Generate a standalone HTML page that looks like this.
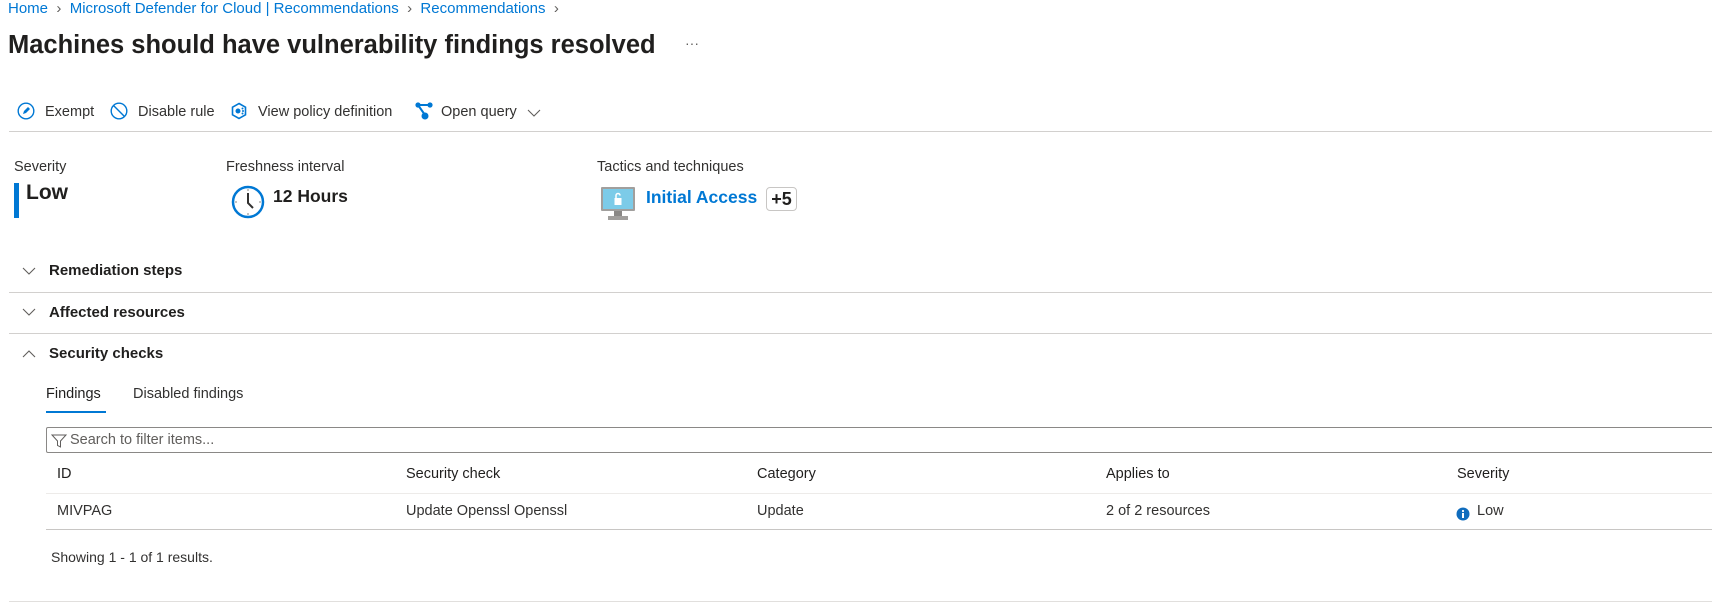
<!DOCTYPE html>
<html><head><meta charset="utf-8"><style>
body{margin:0;width:1712px;height:607px;background:#fff;font-family:"Liberation Sans",sans-serif;color:#323130;position:relative;overflow:hidden;font-size:14.5px}
.a{position:absolute;white-space:nowrap}
.bc{color:#0078d4;font-size:15px}
.sep{color:#605e5c}
.hl{position:absolute;height:1px;background:#e1dfdd}
.b{font-weight:bold;color:#201f1e;font-size:15px}
svg{position:absolute}
</style></head><body>
<div class="a bc" style="left:8px;top:0px">Home <span class="sep">&nbsp;›&nbsp;</span> Microsoft Defender for Cloud | Recommendations <span class="sep">&nbsp;›&nbsp;</span> Recommendations <span class="sep">&nbsp;›</span></div>
<div class="a" style="left:8px;top:31px;font-size:25.5px;font-weight:600;color:#201f1e">Machines should have vulnerability findings resolved</div>
<div class="a" style="left:685px;top:35px;font-size:14px;color:#605e5c">···</div>

<svg style="left:17px;top:102px" width="18" height="18" viewBox="0 0 18 18"><circle cx="9" cy="9" r="7.8" fill="none" stroke="#0078d4" stroke-width="1.4"/><path d="M6 12l1-3 4-4 2 2-4 4z" fill="#0078d4"/></svg>
<div class="a" style="left:45px;top:104px">Exempt</div>
<svg style="left:110px;top:102px" width="18" height="18" viewBox="0 0 18 18"><circle cx="9" cy="9" r="7.8" fill="none" stroke="#0078d4" stroke-width="1.4"/><path d="M3.5 3.5L14.5 14.5" stroke="#0078d4" stroke-width="1.4"/></svg>
<div class="a" style="left:138px;top:104px">Disable rule</div>
<svg style="left:230px;top:102px" width="18" height="18" viewBox="0 0 18 18"><path d="M9 1.5l6.5 3.7v7.6L9 16.5 2.5 12.8V5.2z" fill="none" stroke="#0078d4" stroke-width="1.6"/><circle cx="8" cy="9" r="2.5" fill="#0078d4"/><circle cx="12.5" cy="6.5" r="1" fill="#0078d4"/><circle cx="12.5" cy="11.5" r="1" fill="#0078d4"/><circle cx="13" cy="9" r="1" fill="#0078d4"/></svg>
<div class="a" style="left:258px;top:104px">View policy definition</div>
<svg style="left:414px;top:101px" width="20" height="20" viewBox="0 0 20 20"><path d="M4 4L16 4M4 4L11 14" stroke="#0078d4" stroke-width="2"/><circle cx="4" cy="4" r="2.6" fill="#0078d4"/><circle cx="16" cy="4" r="2.6" fill="#0078d4"/><circle cx="11" cy="15" r="3.5" fill="#0078d4"/></svg>
<div class="a" style="left:441px;top:104px">Open query</div>
<svg style="left:527px;top:108px" width="14" height="10" viewBox="0 0 14 10"><path d="M1 2l6 6 6-6" fill="none" stroke="#605e5c" stroke-width="1.1"/></svg>
<div class="hl" style="left:9px;right:0;top:131px;background:#d2d0ce"></div>

<div class="a" style="left:14px;top:159px">Severity</div>
<div style="position:absolute;left:14px;top:183px;width:5px;height:35px;background:#0078d4"></div>
<div class="a" style="left:26px;top:181px;font-size:21px;font-weight:bold;color:#201f1e">Low</div>

<div class="a" style="left:226px;top:159px">Freshness interval</div>
<svg style="left:231px;top:185px" width="34" height="34" viewBox="0 0 34 34"><circle cx="17" cy="17" r="15" fill="#fff" stroke="#0078d4" stroke-width="2.5"/><g stroke="#8a8886" stroke-width="1"><path d="M17 4v2M17 28v2M4 17h2M28 17h2"/></g><path d="M17 8v10l5 5" fill="none" stroke="#323130" stroke-width="2"/></svg>
<div class="a" style="left:273px;top:186px;font-size:17.5px;font-weight:600;color:#201f1e">12 Hours</div>

<div class="a" style="left:597px;top:159px">Tactics and techniques</div>
<svg style="left:600px;top:186px" width="36" height="36" viewBox="0 0 36 36"><rect x="1" y="1" width="34" height="24" rx="1" fill="#a19f9d"/><rect x="3" y="3" width="30" height="20" fill="#7ccbe8"/><rect x="14" y="25" width="8" height="5" fill="#8a8886"/><rect x="8" y="30" width="20" height="4" fill="#a19f9d"/><rect x="14.5" y="12" width="7" height="7" fill="#fff"/><path d="M16 12v-2.5a2 2 0 0 1 4 0" fill="none" stroke="#fff" stroke-width="1.5"/></svg>
<div class="a" style="left:646px;top:187px;font-size:17.5px;font-weight:600;color:#0078d4">Initial Access</div>
<div class="a" style="left:766px;top:187px;width:29px;height:22px;border:1px solid #c8c6c4;border-radius:4px;font-size:18px;font-weight:600;color:#201f1e;text-align:center;line-height:22px">+5</div>

<svg style="left:22px;top:266px" width="14" height="10" viewBox="0 0 14 10"><path d="M1 2l6 6 6-6" fill="none" stroke="#605e5c" stroke-width="1.1"/></svg>
<div class="a b" style="left:49px;top:262px">Remediation steps</div>
<div class="hl" style="left:9px;right:0;top:292px;background:#d2d0ce"></div>
<svg style="left:22px;top:307px" width="14" height="10" viewBox="0 0 14 10"><path d="M1 2l6 6 6-6" fill="none" stroke="#605e5c" stroke-width="1.1"/></svg>
<div class="a b" style="left:49px;top:304px">Affected resources</div>
<div class="hl" style="left:9px;right:0;top:333px;background:#d2d0ce"></div>
<svg style="left:22px;top:349px" width="14" height="10" viewBox="0 0 14 10"><path d="M1 8l6-6 6 6" fill="none" stroke="#605e5c" stroke-width="1.1"/></svg>
<div class="a b" style="left:49px;top:345px">Security checks</div>

<div class="a" style="left:46px;top:386px;color:#201f1e">Findings</div>
<div style="position:absolute;left:46px;top:411px;width:60px;height:2px;background:#0078d4"></div>
<div class="a" style="left:133px;top:386px">Disabled findings</div>

<div style="position:absolute;left:46px;top:427px;width:1680px;height:24px;border:1px solid #8a8886;border-radius:2px"></div>
<svg style="left:51px;top:433px" width="16" height="16" viewBox="0 0 16 16"><path d="M1 2h14l-5.5 6v6l-3-1.5V8z" fill="none" stroke="#605e5c" stroke-width="1"/></svg>
<div class="a" style="left:70px;top:432px;color:#605e5c">Search to filter items...</div>

<div class="a" style="left:57px;top:466px;color:#201f1e">ID</div>
<div class="a" style="left:406px;top:466px;color:#201f1e">Security check</div>
<div class="a" style="left:757px;top:466px;color:#201f1e">Category</div>
<div class="a" style="left:1106px;top:466px;color:#201f1e">Applies to</div>
<div class="a" style="left:1457px;top:466px;color:#201f1e">Severity</div>
<div class="hl" style="left:46px;right:0;top:493px;background:#edebe9"></div>
<div class="a" style="left:57px;top:503px">MIVPAG</div>
<div class="a" style="left:406px;top:503px">Update Openssl Openssl</div>
<div class="a" style="left:757px;top:503px">Update</div>
<div class="a" style="left:1106px;top:503px">2 of 2 resources</div>
<svg style="left:1456px;top:507px" width="14" height="14" viewBox="0 0 14 14"><circle cx="7" cy="7" r="6.5" fill="#0f6cbd"/><rect x="6" y="6" width="2" height="5" fill="#fff"/><circle cx="7" cy="4" r="1.1" fill="#fff"/></svg>
<div class="a" style="left:1477px;top:503px">Low</div>
<div class="hl" style="left:46px;right:0;top:529px;background:#c8c6c4"></div>
<div class="a" style="left:51px;top:549px;font-size:14px">Showing 1 - 1 of 1 results.</div>
<div class="hl" style="left:9px;right:0;top:601px"></div>
</body></html>
